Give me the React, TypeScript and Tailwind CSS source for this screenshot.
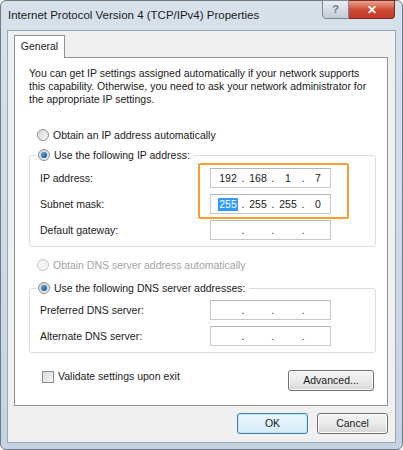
import React from "react";

const font = { fontFamily: '"Liberation Sans", Arial, sans-serif' };

function Radio({ checked, disabled }: { checked?: boolean; disabled?: boolean }) {
  return (
    <span
      className={`relative inline-flex h-[12px] w-[12px] shrink-0 items-center justify-center rounded-full border ${
        disabled ? "border-[#c4c6c8] bg-[#f4f4f4]" : "border-[#8a8d90] bg-gradient-to-br from-[#d6d8db] to-[#f7f7f7]"
      }`}
    >
      {checked && (
        <span className="h-[6px] w-[6px] rounded-full bg-gradient-to-br from-[#6ab3e6] to-[#0d4f85] shadow-[0_0_1px_#1a6aa8]" />
      )}
    </span>
  );
}

function IpField({ values, highlightFirst }: { values?: string[]; highlightFirst?: boolean }) {
  const v = values ?? ["", "", "", ""];
  return (
    <div className="flex h-[20px] w-[121px] items-center border border-[#c5c9ce] border-t-[#b3b8bf] bg-white pl-[6px] text-[10.5px] text-[#1a1a1a]">
      {v.map((s, i) => (
        <React.Fragment key={i}>
          <span className="flex w-[22px] justify-center">
            {i === 0 && highlightFirst ? (
              <span className="bg-[#3399ff] px-[1px] text-white">{s}</span>
            ) : (
              s
            )}
          </span>
          {i < 3 && <span className="flex w-[8px] justify-center">.</span>}
        </React.Fragment>
      ))}
    </div>
  );
}

function Row({ label, children }: { label: string; children: React.ReactNode }) {
  return (
    <div className="flex h-[20px] items-center">
      <span className="w-[170px]">{label}</span>
      {children}
    </div>
  );
}

function Button({ children, focused, className }: { children: React.ReactNode; focused?: boolean; className?: string }) {
  return (
    <div
      className={`flex h-[21px] items-center justify-center rounded-[3px] border text-[10.5px] text-[#1a1a1a] ${
        focused
          ? "border-[#3c7fb1] bg-gradient-to-b from-[#eaf6fd] to-[#d5ecfa] shadow-[inset_0_0_0_1px_#bfe6fb]"
          : "border-[#707070] bg-gradient-to-b from-[#f2f2f2] via-[#ebebeb] to-[#d6d6d6] shadow-[inset_0_0_0_1px_#fcfcfc]"
      } ${className ?? ""}`}
    >
      {children}
    </div>
  );
}

export default function App() {
  return (
    <div style={font} className="h-[450px] w-[403px] bg-white">
      <div className="flex h-[450px] w-[403px] flex-col rounded-[6px] border border-[#6d7c8a] bg-gradient-to-b from-[#d6e1ec] via-[#cfdbe7] to-[#c5d3e1]">
        {/* title bar */}
        <div className="relative flex h-[29px] shrink-0 items-center pl-[7px]">
          <span className="text-[11.5px] text-[#1c1c1c]">Internet Protocol Version 4 (TCP/IPv4) Properties</span>
          <div className="absolute right-[7px] top-[-1px] flex">
            <div className="flex h-[19px] w-[27px] items-center justify-center rounded-bl-[4px] border border-[#7d8894] bg-gradient-to-b from-[#e9eef3] to-[#c3ccd6] text-[11px] font-bold text-[#6d7883]">
              ?
            </div>
            <div className="flex h-[19px] w-[46px] items-center justify-center rounded-br-[4px] border border-l-0 border-[#7a2a20] bg-gradient-to-b from-[#e6a393] via-[#cf4c34] to-[#c0392b] text-[12px] font-bold text-white">
              ✕
            </div>
          </div>
        </div>
        {/* content */}
        <div className="mx-[6px] flex h-[413px] flex-col border border-[#9aa8b6] bg-[#f0f0f0] pl-[6px] pr-[7px] pt-[4px]">
          {/* tab */}
          <div className="relative z-10 -mb-px flex h-[23px] w-[51px] items-center justify-center border border-b-0 border-[#8c939c] bg-white text-[10.5px] text-[#1a1a1a]">
            General
          </div>
          {/* panel */}
          <div className="flex h-[349px] flex-col border border-[#8c939c] bg-white pl-[14px] pr-[11px] pt-[9px] text-[10.5px] leading-[13px] text-[#1a1a1a]">
            <p className="w-[345px]">
              You can get IP settings assigned automatically if your network supports this capability. Otherwise, you need to ask your network administrator for the appropriate IP settings.
            </p>
            <div className="mt-[22px] flex h-[14px] items-center gap-[4px] pl-[8px]">
              <Radio />
              <span>Obtain an IP address automatically</span>
            </div>
            <fieldset className="mt-[6px] rounded-[3px] border border-[#d5dfe5] px-[10px] pb-[6px]">
              <legend className="ml-[-3px] flex h-[14px] items-center gap-[4px] px-[1px]">
                <Radio checked />
                <span className="pr-[3px]">Use the following IP address:</span>
              </legend>
              <div className="mt-[6px] flex flex-col gap-[6px]">
                <div className="relative flex flex-col gap-[6px]">
                  <Row label="IP address:">
                    <IpField values={["192", "168", "1", "7"]} />
                  </Row>
                  <Row label="Subnet mask:">
                    <IpField values={["255", "255", "255", "0"]} highlightFirst />
                  </Row>
                  <div className="absolute left-[158px] top-[-5px] h-[56px] w-[151px] rounded-[2px] border-2 border-[#f5a031]" />
                </div>
                <Row label="Default gateway:">
                  <IpField />
                </Row>
              </div>
            </fieldset>
            <div className="mt-[11px] flex h-[14px] items-center gap-[4px] pl-[8px] text-[#a3a3a3]">
              <Radio disabled />
              <span>Obtain DNS server address automatically</span>
            </div>
            <fieldset className="mt-[9px] rounded-[3px] border border-[#d5dfe5] px-[10px] pb-[6px]">
              <legend className="ml-[-3px] flex h-[14px] items-center gap-[4px] px-[1px]">
                <Radio checked />
                <span className="pr-[3px]">Use the following DNS server addresses:</span>
              </legend>
              <div className="mt-[5px] flex flex-col gap-[6px]">
                <Row label="Preferred DNS server:">
                  <IpField />
                </Row>
                <Row label="Alternate DNS server:">
                  <IpField />
                </Row>
              </div>
            </fieldset>
            <div className="mt-[17px] flex items-start justify-between pl-[13px] pr-[2px]">
              <div className="flex h-[13px] items-center gap-[4px]">
                <span className="h-[12px] w-[12px] border border-[#8a8d90] bg-gradient-to-br from-[#d9dbde] to-[#f6f6f6]" />
                <span>Validate settings upon exit</span>
              </div>
              <Button className="w-[86px]">Advanced...</Button>
            </div>
          </div>
          {/* bottom buttons */}
          <div className="mt-[7px] flex justify-end gap-[9px]">
            <Button focused className="w-[71px]">OK</Button>
            <Button className="w-[71px]">Cancel</Button>
          </div>
        </div>
      </div>
    </div>
  );
}
